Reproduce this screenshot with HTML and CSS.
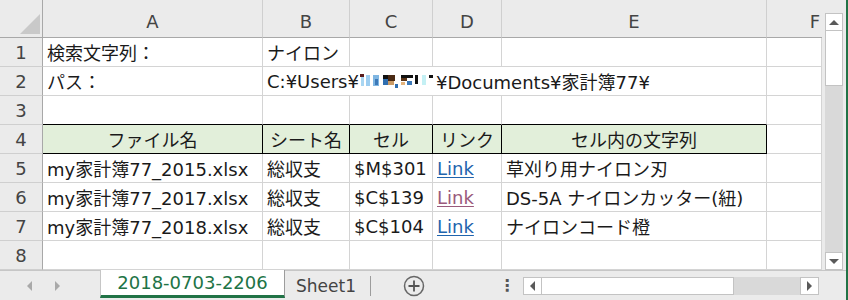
FILE: index.html
```html
<!DOCTYPE html>
<html lang="ja">
<head>
  <meta charset="UTF-8">
  <title>検索結果</title>
  <link rel="stylesheet" href="styles.css">
</head>
<body>
  <div class="window">
    <div class="main">
      <div class="sheet">
        <!-- column headers -->
        <div class="corner"><span class="tri"></span></div>
        <div class="colhd">A</div>
        <div class="colhd">B</div>
        <div class="colhd">C</div>
        <div class="colhd">D</div>
        <div class="colhd">E</div>
        <div class="colhd colf">F</div>

        <!-- row 1 -->
        <div class="rowhd">1</div>
        <div class="c">検索文字列：</div>
        <div class="c">ナイロン</div>
        <div class="c"></div>
        <div class="c"></div>
        <div class="c"></div>
        <div class="c"></div>

        <!-- row 2 -->
        <div class="rowhd">2</div>
        <div class="c">パス：</div>
        <div class="c span4">C:¥Users¥<svg class="mosaic" width="74" height="16" viewBox="0 0 74 16">
            <rect x="0" y="1" width="4" height="3" fill="#5a1b1b"/>
            <rect x="1" y="4" width="3" height="9" fill="#a9d6f2"/>
            <rect x="6" y="2" width="4" height="11" fill="#9dcdf0"/>
            <rect x="13" y="2" width="6" height="11" fill="#7fb6e2"/>
            <rect x="15" y="6" width="3" height="6" fill="#3c79b8"/>
            <rect x="23" y="2" width="5" height="4" fill="#111"/>
            <rect x="23" y="6" width="5" height="6" fill="#2f6eb0"/>
            <rect x="28" y="2" width="7" height="6" fill="#4a2a14"/>
            <rect x="28" y="8" width="6" height="4" fill="#c99a66"/>
            <rect x="35" y="11" width="3" height="4" fill="#2f6eb0"/>
            <rect x="41" y="2" width="12" height="3" fill="#111"/>
            <rect x="41" y="5" width="6" height="3" fill="#5c3518"/>
            <rect x="47" y="8" width="5" height="4" fill="#3c79b8"/>
            <rect x="41" y="9" width="4" height="3" fill="#e3b37c"/>
            <rect x="55" y="2" width="3" height="9" fill="#111"/>
            <rect x="62" y="2" width="4" height="10" fill="#c4f0f4"/>
            <rect x="69" y="2" width="4" height="3" fill="#111"/>
          </svg> ¥Documents¥家計簿77¥</div>
        <div class="c"></div>

        <!-- row 3 -->
        <div class="rowhd">3</div>
        <div class="c top-hd"></div>
        <div class="c top-hd"></div>
        <div class="c top-hd"></div>
        <div class="c top-hd"></div>
        <div class="c top-hd"></div>
        <div class="c"></div>

        <!-- row 4 : table header -->
        <div class="rowhd">4</div>
        <div class="c hd">ファイル名</div>
        <div class="c hd">シート名</div>
        <div class="c hd">セル</div>
        <div class="c hd">リンク</div>
        <div class="c hd">セル内の文字列</div>
        <div class="c"></div>

        <!-- row 5 -->
        <div class="rowhd">5</div>
        <div class="c">my家計簿77_2015.xlsx</div>
        <div class="c">総収支</div>
        <div class="c">$M$301</div>
        <div class="c"><a class="link" href="#">Link</a></div>
        <div class="c">草刈り用ナイロン刃</div>
        <div class="c"></div>

        <!-- row 6 -->
        <div class="rowhd">6</div>
        <div class="c">my家計簿77_2017.xlsx</div>
        <div class="c">総収支</div>
        <div class="c">$C$139</div>
        <div class="c"><a class="link visited" href="#">Link</a></div>
        <div class="c">DS-5A ナイロンカッター(紐)</div>
        <div class="c"></div>

        <!-- row 7 -->
        <div class="rowhd">7</div>
        <div class="c">my家計簿77_2018.xlsx</div>
        <div class="c">総収支</div>
        <div class="c">$C$104</div>
        <div class="c"><a class="link" href="#">Link</a></div>
        <div class="c">ナイロンコード橙</div>
        <div class="c"></div>

        <!-- row 8 -->
        <div class="rowhd">8</div>
        <div class="c"></div>
        <div class="c"></div>
        <div class="c"></div>
        <div class="c"></div>
        <div class="c"></div>
        <div class="c"></div>
      </div>

      <div class="vscroll">
        <div class="sbtn"><span class="arrow up"></span></div>
        <div class="vthumb"></div>
        <div class="vtrack"></div>
        <div class="sbtn"><span class="arrow down"></span></div>
      </div>
    </div>

    <div class="tabbar">
      <div class="tabnav">
        <span class="arrow left light"></span>
        <span class="arrow right light"></span>
      </div>
      <div class="tab active">2018-0703-2206</div>
      <div class="tab">Sheet1</div>
      <div class="addsheet">
        <svg width="22" height="22" viewBox="0 0 22 22">
          <circle cx="11" cy="11" r="9.5" fill="none" stroke="#666" stroke-width="1.5"/>
          <path d="M11 5.5v11M5.5 11h11" stroke="#555" stroke-width="1.8"/>
        </svg>
      </div>
      <div class="dots">⋮</div>
      <div class="hscroll">
        <div class="sbtn h"><span class="arrow left"></span></div>
        <div class="hthumb"></div>
        <div class="htrack"></div>
        <div class="sbtn h"><span class="arrow right"></span></div>
      </div>
    </div>
  </div>
</body>
</html>
```

FILE: styles.css
```css
body {
  margin: 0;
  width: 848px;
  height: 300px;
  overflow: hidden;
  font-family: "DejaVu Sans", "Noto Sans CJK JP", sans-serif;
  font-size: 18px;
  color: #1a1a1a;
  background: #ebebeb;
}

.window {
  width: 846px;
  height: 300px;
  border-right: 2px solid #217346;
  display: flex;
  flex-direction: column;
}

.main {
  display: flex;
  height: 270px;
}

/* grid of cells */
.sheet {
  display: grid;
  grid-template-columns: 43px 220px 87px 83px 69px 265px 55px;
  grid-template-rows: 38px repeat(8, 29px);
  background: #fff;
}

.sheet > div {
  box-sizing: border-box;
}

.corner {
  background: #ebebeb;
  border-right: 1px solid #a8a8a8;
  border-bottom: 1px solid #a8a8a8;
  position: relative;
}
.corner .tri {
  position: absolute;
  left: 20px;
  top: 14px;
  width: 20px;
  height: 20px;
  background: #c9c9c9;
  clip-path: polygon(100% 0, 100% 100%, 0 100%);
}

.colhd {
  background: #ebebeb;
  color: #444;
  border-right: 1px solid #cfcfcf;
  border-bottom: 1px solid #a8a8a8;
  display: flex;
  align-items: center;
  justify-content: center;
  padding-top: 6px;
}
.colhd.colf {
  justify-content: flex-end;
  padding-right: 2px;
  border-right: none;
}

.rowhd {
  background: #ebebeb;
  color: #444;
  border-right: 1px solid #a8a8a8;
  border-bottom: 1px solid #cfcfcf;
  display: flex;
  align-items: center;
  justify-content: center;
}

.c {
  border-right: 1px solid #d4d4d4;
  border-bottom: 1px solid #d4d4d4;
  padding-left: 4px;
  display: flex;
  align-items: center;
  white-space: nowrap;
}
.c.span4 {
  grid-column: span 4;
}
.c.top-hd {
  border-bottom-color: #000;
}
.c.hd {
  background: #e2efda;
  border-right-color: #000;
  border-bottom-color: #000;
  justify-content: center;
  padding-left: 0;
}

.mosaic {
  margin: 0 2px 0 1px;
}

.link {
  color: #1f64ad;
  text-decoration: underline;
  text-decoration-thickness: 1px;
  text-underline-offset: 2px;
}
.link.visited {
  color: #9a5a7c;
}

/* vertical scrollbar */
.vscroll {
  width: 24px;
  box-sizing: border-box;
  padding: 13px 3px 0 3px;
  display: flex;
  flex-direction: column;
  background: #ebebeb;
}
.sbtn {
  height: 18px;
  box-sizing: border-box;
  background: #fff;
  border: 1px solid #c3c3c3;
  display: flex;
  align-items: center;
  justify-content: center;
}
.vthumb {
  height: 54px;
  background: #fff;
  border: 1px solid #c3c3c3;
  border-top: none;
}
.vtrack {
  flex: 1;
  background: #d9d9d9;
}

.arrow {
  width: 0;
  height: 0;
  border: 4px solid transparent;
}
.arrow.up {
  border-bottom: 5px solid #5a5a5a;
  border-top: none;
  border-left-width: 5px;
  border-right-width: 5px;
}
.arrow.down {
  border-top: 5px solid #5a5a5a;
  border-bottom: none;
  border-left-width: 5px;
  border-right-width: 5px;
}
.arrow.left {
  border-right: 5px solid #5a5a5a;
  border-left: none;
  border-top-width: 5px;
  border-bottom-width: 5px;
}
.arrow.right {
  border-left: 5px solid #5a5a5a;
  border-right: none;
  border-top-width: 5px;
  border-bottom-width: 5px;
}
.arrow.light.left {
  border-right-color: #a9a9a9;
}
.arrow.light.right {
  border-left-color: #a9a9a9;
}

/* sheet tabs */
.tabbar {
  height: 30px;
  box-sizing: border-box;
  border-top: 1px solid #c6c6c6;
  display: flex;
  align-items: stretch;
  background: #ebebeb;
}
.tabnav {
  width: 100px;
  display: flex;
  align-items: center;
  gap: 23px;
  padding-left: 27px;
  box-sizing: border-box;
}
.tab {
  display: flex;
  align-items: center;
  justify-content: center;
  color: #444;
  font-size: 17px;
}
.tab.active {
  width: 185px;
  margin-top: -1px;
  background: #fff;
  color: #217346;
  font-size: 18px;
  border-left: 1px solid #c6c6c6;
  border-right: 1px solid #9c9c9c;
  border-bottom: 3px solid #217346;
  box-sizing: border-box;
  margin-bottom: 2px;
}
.tab:not(.active) {
  width: 86px;
  box-sizing: border-box;
  padding-right: 4px;
  position: relative;
}
.tab:not(.active)::after {
  content: "";
  position: absolute;
  right: 0;
  top: 5px;
  bottom: 4px;
  border-right: 1px solid #9c9c9c;
}
.addsheet {
  width: 86px;
  display: flex;
  align-items: center;
  justify-content: center;
}
.dots {
  width: 32px;
  margin-left: 34px;
  display: flex;
  align-items: center;
  justify-content: center;
  color: #555;
  font-size: 16px;
  font-weight: bold;
}
.hscroll {
  display: flex;
  align-items: center;
}
.sbtn.h {
  width: 19px;
}
.hthumb {
  width: 192px;
  height: 18px;
  box-sizing: border-box;
  background: #fff;
  border: 1px solid #c3c3c3;
  border-left: none;
}
.htrack {
  width: 66px;
  height: 18px;
  background: #d9d9d9;
}
```
